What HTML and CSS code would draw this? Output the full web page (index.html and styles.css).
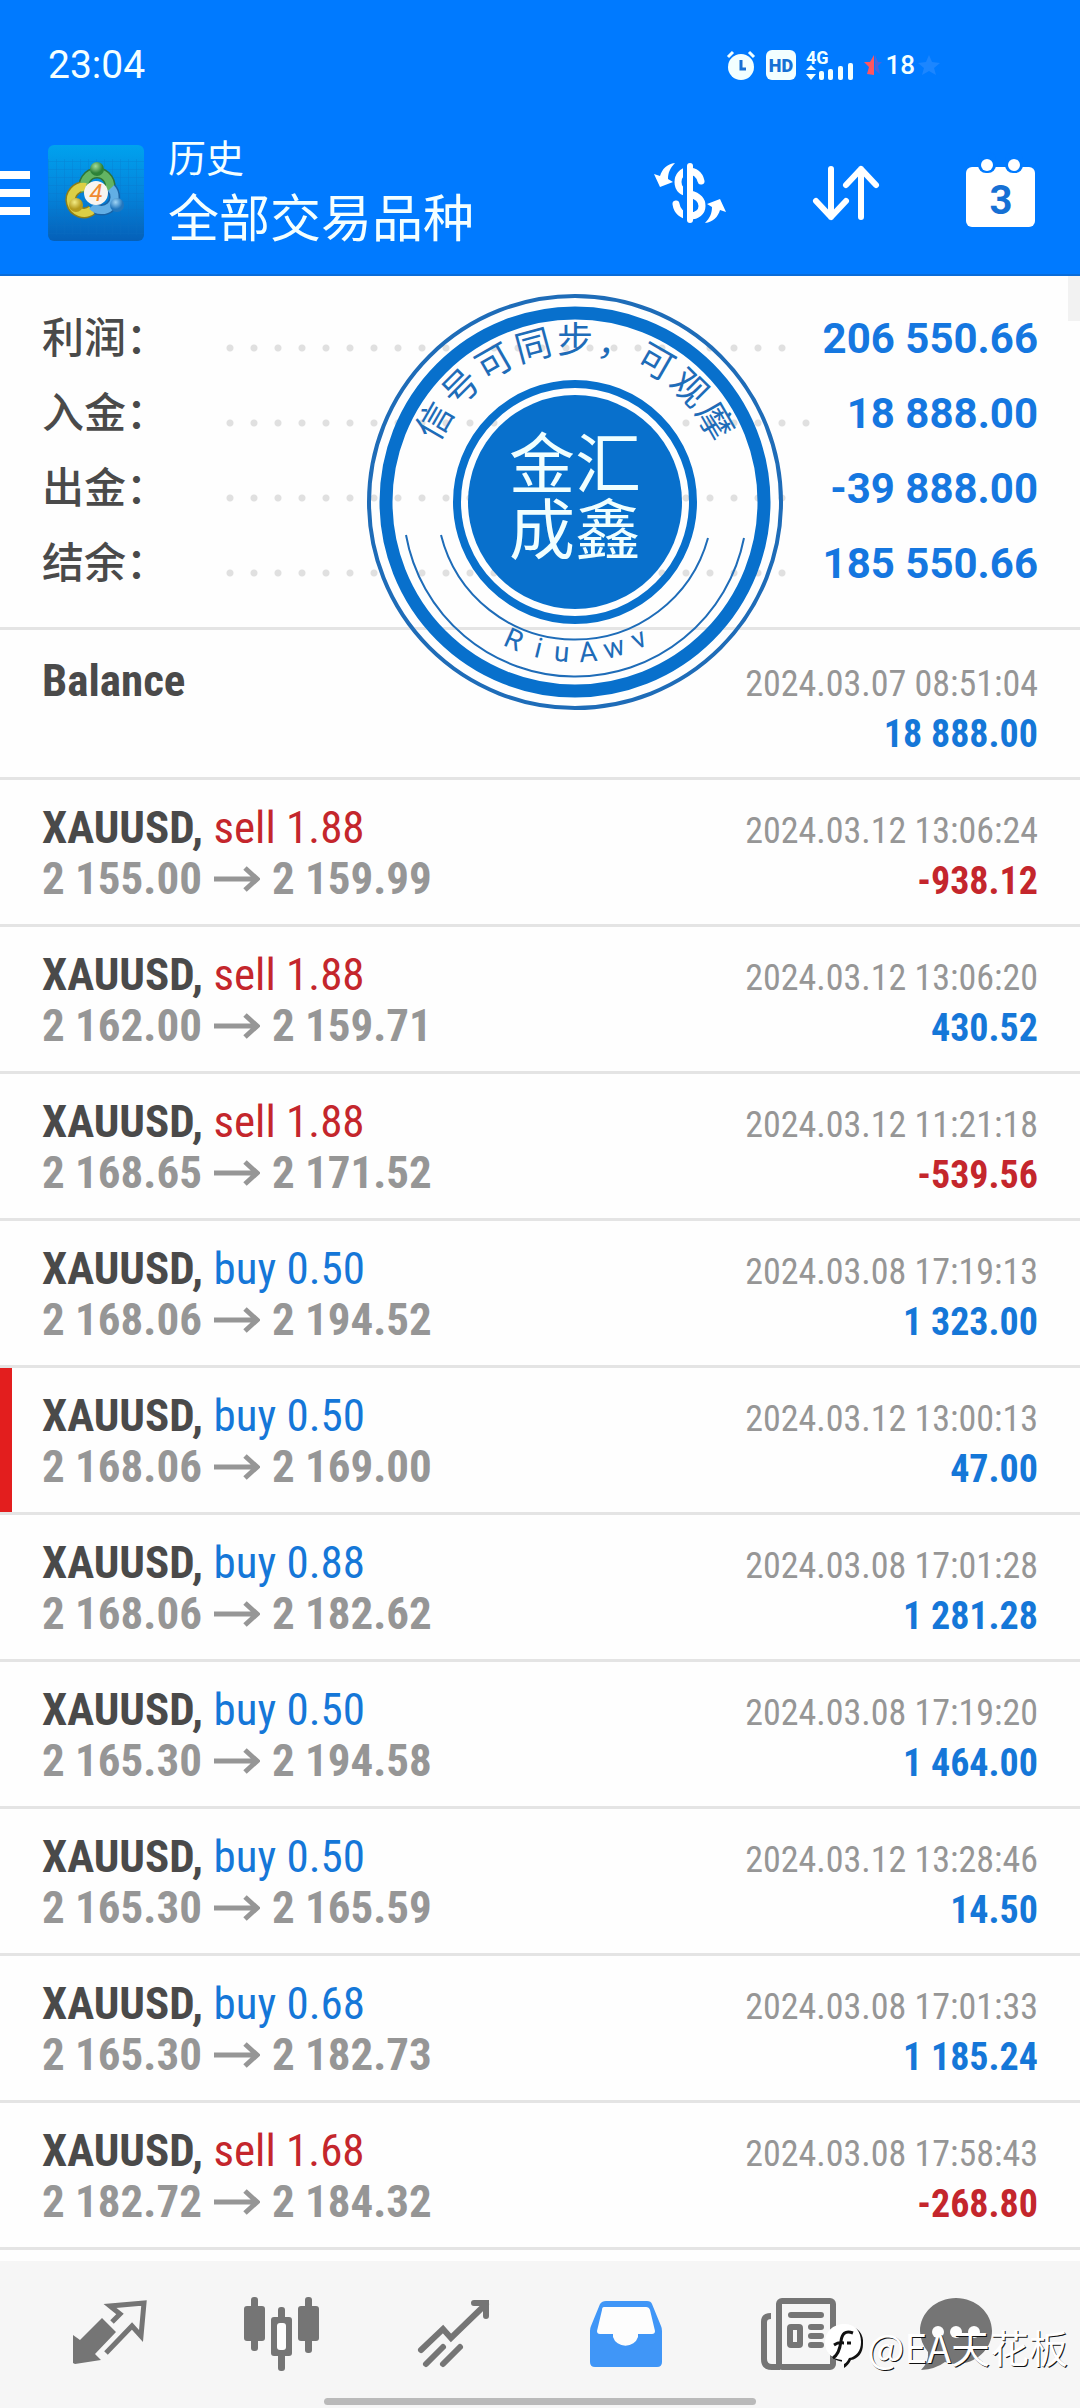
FILE: index.html
```
<!DOCTYPE html>
<html lang="zh-CN">
<head>
<meta charset="utf-8">
<meta name="viewport" content="width=device-width, initial-scale=1">
<title>历史</title>
<link rel="stylesheet" href="styles.css">
</head>
<body>
<header class="header">
  <div class="status">
    <span class="clock">23:04</span>
    <span class="status-icons">
      <svg class="alarm" width="30" height="30" viewBox="0 0 30 30"><circle cx="15" cy="17" r="13" fill="#f2ffff"/><path d="M2 7l5-5M28 7l-5-5" stroke="#f2ffff" stroke-width="3"/><path d="M15 10v9h5" fill="none" stroke="#1670d4" stroke-width="3"/></svg>
      <svg width="30" height="30" viewBox="0 0 30 30"><rect width="30" height="30" rx="6" fill="#f2ffff"/><text class="hd" x="15" y="22" text-anchor="middle">HD</text></svg>
      <svg class="signal" width="48" height="32" viewBox="0 0 48 32" fill="#f2ffff"><text class="net" x="0" y="15">4G</text><path d="M5 16l5 5H0zM5 31l-5-6h10z"/><rect x="13" y="22" width="5" height="9" rx="2"/><rect x="22" y="20" width="5" height="11" rx="2"/><rect x="32" y="17" width="5" height="14" rx="2"/><rect x="42" y="14" width="5" height="17" rx="2"/></svg>
      <svg width="18" height="22" viewBox="0 0 18 22"><path d="M10 1v20l-7-1 2-7-5-5h6z" fill="#ff5560"/><path d="M11 1l3 7h4l-4 4 2 8-5-4z" fill="#6a5ad0" opacity=".7"/></svg>
      <span class="battery">18</span>
      <svg width="22" height="22" viewBox="0 0 22 22"><path d="M11 1l3 7 8 1-6 5 2 7-7-4-7 4 2-7-6-5 8-1z" fill="#1c86ff"/></svg>
    </span>
  </div>
  <div class="bar">
    <button class="icon-btn" aria-label="菜单"><svg width="30" height="44" viewBox="0 0 30 44" fill="#fff"><path d="M0 0h30v8H0zM0 18h30v8H0zM0 36h30v8H0z"/></svg></button>
    <svg class="app-icon" width="96" height="96" viewBox="0 0 96 96">
      <defs>
        <linearGradient id="sky" x1="0" y1="0" x2="0" y2="1"><stop offset="0" stop-color="#00a2ee"/><stop offset=".5" stop-color="#0485dc"/><stop offset="1" stop-color="#0560b8"/></linearGradient>
        <radialGradient id="green" cx=".4" cy=".3"><stop offset="0" stop-color="#a5dc9a"/><stop offset="1" stop-color="#2d8238"/></radialGradient>
        <radialGradient id="gold" cx=".4" cy=".3"><stop offset="0" stop-color="#f3ec84"/><stop offset="1" stop-color="#b59a1c"/></radialGradient>
        <radialGradient id="azure" cx=".4" cy=".3"><stop offset="0" stop-color="#9fd4f5"/><stop offset="1" stop-color="#2276bd"/></radialGradient>
        <pattern id="grid" width="8" height="8" patternUnits="userSpaceOnUse"><path d="M0 0h8M0 0v8" stroke="#0a6cc0" opacity=".45"/></pattern>
      </defs>
      <rect width="96" height="96" rx="6" fill="url(#sky)"/><rect y="14" width="96" height="76" fill="url(#grid)"/>
      <g fill="none" stroke-width="11"><path d="M37 46a13 13 0 1 1 24 0" stroke="#2e7438"/><path d="M44 65a13 13 0 1 1-6-23" stroke="#8c7d1a"/><path d="M63 43a13 13 0 1 1-19 18" stroke="#1a62a4"/></g>
      <g fill="none" stroke-width="8"><path d="M37 46a13 13 0 1 1 24 0" stroke="#63b463"/><path d="M44 65a13 13 0 1 1-6-23" stroke="#dccf45"/><path d="M63 43a13 13 0 1 1-19 18" stroke="#62aee5"/></g>
      <circle cx="49" cy="24" r="7" fill="url(#green)"/><circle cx="28" cy="60" r="7" fill="url(#gold)"/><circle cx="69" cy="60" r="7" fill="url(#azure)"/>
      <circle cx="48" cy="48" r="12" fill="#f8f4f0"/><text class="four" x="48" y="56" text-anchor="middle">4</text>
    </svg>
    <div class="titles"><h1>历史</h1><p>全部交易品种</p></div>
    <div class="actions">
      <button class="icon-btn" aria-label="货币"><svg width="72" height="62" viewBox="0 0 72 62"><path d="M47 19C45 11 39 9 34 9c-6 0-10 5-10 11 0 8 5 10 12 12 8 2 12 6 12 12s-5 10-12 10c-8 0-13-5-14-12" fill="none" stroke="#fff" stroke-width="7" stroke-linecap="round"/><path d="M31 0v62" stroke="#007aff" stroke-width="4"/><path d="M36 4v54" stroke="#fff" stroke-width="6" stroke-linecap="round"/><path id="swap" d="M21 1C13 2 8 7 6 14L0 12l6 13 13-5-5-3c0-6 2-11 7-16z" fill="#fff"/><use href="#swap" transform="rotate(180 36 31)"/></svg></button>
      <button class="icon-btn" aria-label="排序"><svg width="66" height="56" viewBox="0 0 66 56" fill="none" stroke="#fff" stroke-width="6" stroke-linecap="round" stroke-linejoin="round"><path d="M18 4v48M3 36l15 16 15-16M48 52V4M33 20L48 4l15 16"/></svg></button>
      <button class="icon-btn" aria-label="日历"><svg width="69" height="70" viewBox="0 0 69 70"><rect y="9" width="69" height="60" rx="6" fill="#fff"/><rect x="12" y="-6" width="18" height="21" rx="8" fill="#007aff"/><rect x="39" y="-6" width="18" height="21" rx="8" fill="#007aff"/><circle cx="21" cy="7" r="6" fill="#fff"/><circle cx="48" cy="7" r="6" fill="#fff"/><text class="day" x="35" y="56" text-anchor="middle">3</text></svg></button>
    </div>
  </div>
</header>

<main class="main">
  <dl class="summary">
    <div class="sum-row"><dt>利润：</dt><dd>206 550.66</dd></div>
    <div class="sum-row"><dt>入金：</dt><dd>18 888.00</dd></div>
    <div class="sum-row"><dt>出金：</dt><dd class="minus">-39 888.00</dd></div>
    <div class="sum-row"><dt>结余：</dt><dd>185 550.66</dd></div>
  </dl>

  <svg width="0" height="0" class="defs"><symbol id="to" viewBox="0 0 46 26"><path d="M0 13h42M31 2l12 11-12 11" fill="none" stroke="#969696" stroke-width="5"/></symbol></svg>

  <ul class="deals">
    <li class="deal first"><strong>Balance</strong><time>2024.03.07 08:51:04</time><b class="amount">18 888.00</b></li>
    <li class="deal"><strong>XAUUSD, <span class="sell">sell 1.88</span></strong><time>2024.03.12 13:06:24</time><b class="prices">2 155.00<svg><use href="#to"/></svg>2 159.99</b><b class="amount loss">-938.12</b></li>
    <li class="deal"><strong>XAUUSD, <span class="sell">sell 1.88</span></strong><time>2024.03.12 13:06:20</time><b class="prices">2 162.00<svg><use href="#to"/></svg>2 159.71</b><b class="amount">430.52</b></li>
    <li class="deal"><strong>XAUUSD, <span class="sell">sell 1.88</span></strong><time>2024.03.12 11:21:18</time><b class="prices">2 168.65<svg><use href="#to"/></svg>2 171.52</b><b class="amount loss">-539.56</b></li>
    <li class="deal"><strong>XAUUSD, <span class="buy">buy 0.50</span></strong><time>2024.03.08 17:19:13</time><b class="prices">2 168.06<svg><use href="#to"/></svg>2 194.52</b><b class="amount">1 323.00</b></li>
    <li class="deal marked"><strong>XAUUSD, <span class="buy">buy 0.50</span></strong><time>2024.03.12 13:00:13</time><b class="prices">2 168.06<svg><use href="#to"/></svg>2 169.00</b><b class="amount">47.00</b></li>
    <li class="deal"><strong>XAUUSD, <span class="buy">buy 0.88</span></strong><time>2024.03.08 17:01:28</time><b class="prices">2 168.06<svg><use href="#to"/></svg>2 182.62</b><b class="amount">1 281.28</b></li>
    <li class="deal"><strong>XAUUSD, <span class="buy">buy 0.50</span></strong><time>2024.03.08 17:19:20</time><b class="prices">2 165.30<svg><use href="#to"/></svg>2 194.58</b><b class="amount">1 464.00</b></li>
    <li class="deal"><strong>XAUUSD, <span class="buy">buy 0.50</span></strong><time>2024.03.12 13:28:46</time><b class="prices">2 165.30<svg><use href="#to"/></svg>2 165.59</b><b class="amount">14.50</b></li>
    <li class="deal"><strong>XAUUSD, <span class="buy">buy 0.68</span></strong><time>2024.03.08 17:01:33</time><b class="prices">2 165.30<svg><use href="#to"/></svg>2 182.73</b><b class="amount">1 185.24</b></li>
    <li class="deal"><strong>XAUUSD, <span class="sell">sell 1.68</span></strong><time>2024.03.08 17:58:43</time><b class="prices">2 182.72<svg><use href="#to"/></svg>2 184.32</b><b class="amount loss">-268.80</b></li>
  </ul>

  <div class="scroll-thumb"></div>

  <svg class="stamp" width="416" height="416" viewBox="-208 -208 416 416">
    <g fill="none" stroke="#0870cc">
      <circle r="206" stroke-width="4" stroke="#1e6cb8"/><circle r="189" stroke-width="13"/><circle r="118" stroke-width="8"/>
      <path d="M-169 33A172 172 0 0 0 169 36M-134 33A138 138 0 0 0 133 36" stroke-width="2" stroke="#1e6cb8"/>
    </g>
    <circle r="107" fill="#0870cc"/>
    <g class="arc-top" text-anchor="middle">
      <text y="-149" transform="rotate(-60)">信</text><text y="-149" transform="rotate(-45)">号</text><text y="-149" transform="rotate(-30)">可</text><text y="-149" transform="rotate(-15)">同</text><text y="-149">步</text><text y="-149" transform="rotate(15)">，</text><text y="-149" transform="rotate(30)">可</text><text y="-149" transform="rotate(45)">观</text><text y="-149" transform="rotate(60)">摩</text>
    </g>
    <g class="arc-bottom" text-anchor="middle">
      <text y="160" transform="rotate(24)">R</text><text y="160" transform="rotate(14)">i</text><text y="160" transform="rotate(5)">u</text><text y="160" transform="rotate(-5)">A</text><text y="160" transform="rotate(-15)">w</text><text y="160" transform="rotate(-25)">v</text>
    </g>
    <g class="name" text-anchor="middle"><text y="-14">金汇</text><text y="52">成鑫</text></g>
  </svg>
</main>

<footer class="footer">
  <nav class="tabs">
    <a href="#" aria-label="报价"><svg width="74" height="66" viewBox="0 0 74 66"><path d="M0 34l7 5 22-22 14 14-21 22 6 6-26 4-2-1z" fill="#757575"/><path d="M39 21l8-8-10-8 34-3-3 33-9-10-26 27" fill="none" stroke="#757575" stroke-width="5"/></svg></a>
    <a href="#" aria-label="图表"><svg width="76" height="74" viewBox="0 0 76 74" fill="#757575"><rect y="9" width="21" height="35" rx="3"/><rect x="7" width="7" height="54" rx="3"/><rect x="54" y="9" width="21" height="35" rx="3"/><rect x="61" width="7" height="56" rx="3"/><rect x="34" y="10" width="7" height="64" rx="3"/><rect x="27" y="20" width="21" height="39" rx="3"/><rect x="33" y="26" width="9" height="27" rx="3" fill="#fdfdfd"/></svg></a>
    <a href="#" aria-label="交易"><svg width="72" height="68" viewBox="0 0 72 68" fill="none" stroke="#757575" stroke-width="6" stroke-linecap="round"><path d="M3 50l22-21 8 9L68 4M56 3h12v13M25 47L8 64M42 47L25 64"/></svg></a>
    <a href="#" aria-label="历史" aria-current="page"><svg width="72" height="66" viewBox="0 0 72 66"><path d="M16 0h41q4 0 5 3l9 22q1 2 1 5v31q0 5-5 5H5q-5 0-5-5V30q0-3 1-5L10 3q2-3 6-3z" fill="#4096f7"/><path d="M14 6h42q3 0 4 3l5 21q0 3-3 3H48v3a13 12 0 0 1-25 0v-3H10q-3 0-3-3L12 9q0-3 2-3z" fill="#fdfdfd"/></svg></a>
    <a href="#" aria-label="新闻"><svg width="75" height="72" viewBox="0 0 75 72" fill="none" stroke="#757575" stroke-width="6"><path d="M10 18q-7 0-7 6v37q0 8 8 8h8" /><rect x="18" y="3" width="54" height="66" rx="3"/><path d="M30 17h30M50 29h10M50 38h10M50 47h10" stroke-linecap="round"/><rect x="29" y="29" width="10" height="18" rx="1"/></svg></a>
    <a href="#" aria-label="消息"><svg width="72" height="72" viewBox="0 0 72 72"><path d="M36 0c20 0 36 15 36 33S56 66 36 66q-6 0-11-2-9 7-24 8 8-8 7-18Q0 44 0 33C0 15 16 0 36 0z" fill="#757575"/><g fill="#fdfdfd"><circle cx="18" cy="34" r="6"/><circle cx="36" cy="34" r="6"/><circle cx="54" cy="34" r="6"/></g></svg></a>
  </nav>
  <div class="home-bar"></div>
  <div class="watermark"><svg width="38" height="44" viewBox="0 0 38 44"><path d="M20 1C32 1 38 9 37 19c0 9-5 15-12 16-2 4-4 6-7 8v-6C7 36 1 29 1 19 1 9 9 1 20 1z" fill="#111" transform="translate(1 1)"/><path d="M19 0C31 0 36 8 36 18c0 9-5 15-12 16-2 4-4 6-7 7v-5C6 35 0 28 0 18 0 8 8 0 19 0z" fill="#fff"/><path d="M28 9c-8-3-11 1-12 8-1 8-3 14-8 17M9 21c6-4 8-2 10-2M22 19h4" fill="none" stroke="#111" stroke-width="3"/></svg><span>@EA天花板</span></div>
</footer>
</body>
</html>
```
FILE: styles.css
```
* { box-sizing: border-box; }
body {
  margin: 0;
  min-height: 100vh;
  display: flex;
  flex-direction: column;
  background: #fefefe;
  color: #4a4a4a;
  font-family: Roboto, "Noto Sans CJK SC", sans-serif;
}
h1, p, dl, dd, ul { margin: 0; padding: 0; }
svg { display: block; flex: none; overflow: visible; }

/* header */
.header { background: #007aff; color: #f4ffff; border-bottom: 2px solid #0a6cd8; }
.status {
  display: flex;
  align-items: center;
  justify-content: space-between;
  padding: 40px 140px 40px 48px;
  line-height: 50px;
}
.clock { font-size: 39px; }
.status-icons { display: flex; align-items: center; gap: 10px; }
.battery { font-size: 26px; font-weight: 500; margin: 0 -7px; }
.hd { font-size: 18px; font-weight: 900; fill: #1670d4; }
.net { font-size: 18px; font-weight: 700; }
.bar { display: flex; align-items: center; padding: 0 45px 18px 0; }
.app-icon { margin: 0 24px 0 18px; }
.four { font-size: 24px; font-style: italic; fill: #f08a30; }
.titles { padding-top: 4px; }
.titles h1 { font-size: 38px; line-height: 50px; font-weight: 400; }
.titles p { font-size: 51px; line-height: 72px; }
.actions { display: flex; align-items: center; gap: 87px; margin-left: auto; }
.icon-btn { border: 0; padding: 0; background: none; }
.day { font: 700 40px Roboto, sans-serif; fill: #1670d4; }

/* account totals */
.main { position: relative; flex: 1; }
.summary { padding: 25px 42px 26px; border-bottom: 3px solid #e4e4e4; }
.sum-row { display: flex; align-items: center; font-size: 42px; line-height: 75px; }
.sum-row dt { width: 176px; font-weight: 500; }
.sum-row::after {
  content: "";
  order: 1;
  flex: 1;
  height: 8px;
  margin-top: 18px;
  background: radial-gradient(circle, #e0e0e0 3px, transparent 4px) 0 0 / 24px 8px repeat-x;
}
.sum-row dd { order: 2; margin-left: 24px; font-weight: 700; color: #1577e0; }
.sum-row .minus { margin-left: 36px; }

/* deal list */
.defs { position: absolute; }
.deals { list-style: none; font-family: "Roboto Condensed", Roboto, sans-serif; }
.deal {
  display: grid;
  grid-template: 51px 51px / 1fr auto;
  align-items: baseline;
  padding: 22px 42px 20px;
  border-bottom: 3px solid #e4e4e4;
  font-size: 45px;
  line-height: 51px;
}
.deal.first { padding-top: 25px; }
.deal.first .amount { margin-top: 6px; }
.deal.marked { box-shadow: inset 12px 0 #e31e1e; }
.deal strong span { font-weight: 400; }
.sell { color: #c4262c; }
.buy { color: #1577d8; }
.prices { display: flex; align-items: center; color: #969696; }
.prices svg { width: 46px; height: 26px; margin: 0 12px; }
.deal time { font-size: 36px; line-height: 45px; color: #969696; text-align: right; }
.amount { grid-column: 2; font-size: 38px; line-height: 45px; color: #1577d8; text-align: right; }
.loss { color: #c4262c; }

.scroll-thumb { position: absolute; top: 0; right: 0; width: 12px; height: 45px; background: #f2f2f2; }

/* seal over the totals */
.stamp { position: absolute; top: 18px; left: 34%; }
.arc-top { font-size: 36px; fill: #1e6cb8; }
.arc-bottom { font-size: 28px; fill: #1e6cb8; }
.name { font-size: 66px; fill: #f0ffff; }

/* bottom tabs */
.footer { position: relative; background: #f6f6f6; padding: 35px 0 3px; }
.tabs { display: grid; grid-template-columns: repeat(5, 172fr) 144fr; padding: 0 52px 0 24px; height: 75px; }
.tabs a { display: flex; align-items: center; justify-content: center; }
.home-bar { width: 40%; height: 7px; margin: 27px auto 0; border-radius: 4px; background: #bababa; }
.watermark {
  position: absolute;
  top: 60px;
  right: 12px;
  display: flex;
  align-items: center;
  gap: 4px;
  color: #fff;
  font: 400 39px/50px "Noto Sans CJK SC", sans-serif;
  text-shadow: 1px 1px 0 #111;
}
```
